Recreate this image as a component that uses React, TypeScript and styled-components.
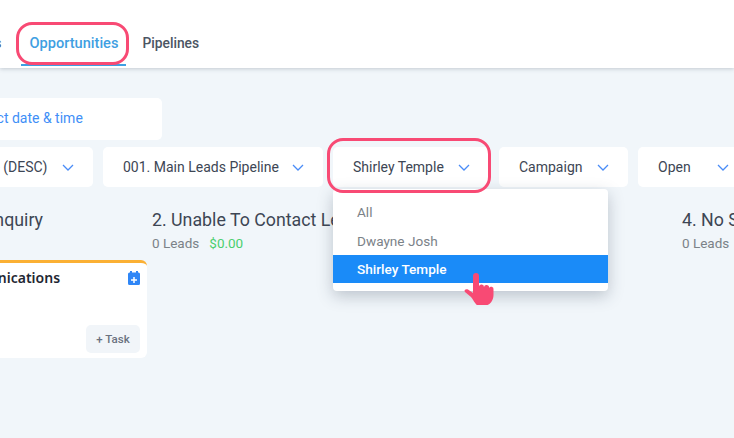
import styled, { createGlobalStyle } from 'styled-components'

const GlobalStyle = createGlobalStyle`
  html, body {
    margin: 0;
    padding: 0;
    background: #f1f6fa;
    font-family: Roboto, "Liberation Sans", sans-serif;
  }
`

const Page = styled.div`
  width: 734px;
  height: 438px;
  overflow: hidden;
  background: #f1f6fa;
`

const Header = styled.header`
  height: 68px;
  background: #fff;
  box-shadow: 0 1px 4px rgba(60, 70, 90, 0.25);
  display: flex;
  align-items: stretch;
  justify-content: flex-start;
`

const Tabs = styled.nav`
  display: flex;
  align-items: stretch;
  gap: 8px;
  margin-left: -62px;
`

const Tab = styled.a<{ $active?: boolean }>`
  position: relative;
  display: flex;
  align-items: center;
  height: 66px;
  padding: 22px 8px 0;
  box-sizing: border-box;
  font-size: ${props => (props.$active ? '14.6px' : '13.8px')};
  font-weight: 500;
  color: ${props => (props.$active ? '#3f9fe2' : '#4b5563')};
  border-bottom: 2px solid ${props => (props.$active ? '#3f9fe2' : 'transparent')};
  white-space: nowrap;

  &:first-child {
    padding-right: 12px;
  }
`

const Highlight = styled.span<{ $inset: string }>`
  position: absolute;
  inset: ${props => props.$inset};
  border: 3px solid #f84a74;
  border-radius: 16px;
  pointer-events: none;
  z-index: 3;
`

const Content = styled.main`
  padding-top: 30px;
`

const DateBox = styled.div`
  width: 209px;
  height: 42px;
  margin-left: -47px;
  padding: 0 0 2px 17px;
  box-sizing: border-box;
  display: flex;
  align-items: center;
  background: #fff;
  border-radius: 5px;
  font-size: 14px;
  color: #3f8ff7;
`

const Filters = styled.div`
  display: flex;
  gap: 10px;
  margin: 7px 0 0 -49px;
`

const Select = styled.div<{ $width: number }>`
  position: relative;
  flex: 0 0 ${props => props.$width}px;
  height: 40px;
  padding: 0 19px 0 20px;
  box-sizing: border-box;
  display: flex;
  align-items: center;
  justify-content: space-between;
  background: #fff;
  border-radius: 5px;
  font-size: 14px;
  color: #3d4654;
  white-space: nowrap;
`

const Chevron = styled.svg`
  flex: none;
  width: 12px;
  height: 7px;
  fill: none;
  stroke: #4a8cf7;
  stroke-width: 1.3;
`

const Menu = styled.ul`
  position: absolute;
  top: 42px;
  left: 0;
  width: 275px;
  height: 102px;
  margin: 0;
  padding: 8px 0 0;
  box-sizing: border-box;
  list-style: none;
  background: #fff;
  border-radius: 4px;
  box-shadow: 0 5px 16px rgba(50, 65, 85, 0.28);
  z-index: 2;
`

const MenuItem = styled.li<{ $selected?: boolean }>`
  height: 28px;
  margin-bottom: 1px;
  padding: ${props => (props.$selected ? '0' : '2px 0 0')};
  padding-left: 24px;
  box-sizing: border-box;
  display: flex;
  align-items: center;
  font-size: 13.6px;
  font-weight: ${props => (props.$selected ? 500 : 400)};
  color: ${props => (props.$selected ? '#fff' : '#7b8288')};
  background: ${props => (props.$selected ? '#1a8bf8' : 'transparent')};
`

const Hand = styled.svg`
  position: absolute;
  left: 129px;
  top: 82px;
  width: 34px;
  height: 36px;
  fill: #f84a74;
  z-index: 4;
`

const Board = styled.section`
  display: flex;
  gap: 5px;
  margin: 21px 0 0 -113px;
`

const Column = styled.div`
  flex: 0 0 260px;
`

const ColumnTitle = styled.h2`
  margin: 0;
  font-size: 17.8px;
  line-height: 24px;
  font-weight: 400;
  color: #3d4654;
  white-space: nowrap;
`

const ColumnMeta = styled.div`
  display: flex;
  gap: 10px;
  margin-top: 1px;
  font-size: 13.5px;
  line-height: 20px;
  color: #7b8288;
`

const Amount = styled.span`
  color: #4bcf6f;
`

const Card = styled.article`
  height: 98px;
  margin-top: 7px;
  padding: 6px 7px 5px 21px;
  box-sizing: border-box;
  display: flex;
  flex-direction: column;
  background: #fff;
  border-top: 3px solid #fbb034;
  border-radius: 6px;
`

const CardHead = styled.div`
  display: flex;
  align-items: center;
  justify-content: space-between;
`

const CardTitle = styled.h3`
  margin: 0;
  font-family: "Noto Sans", sans-serif;
  font-size: 14px;
  line-height: 18px;
  font-weight: 600;
  color: #1f2733;
  white-space: nowrap;
`

const CalendarIcon = styled.svg`
  width: 12px;
  height: 14px;
`

const TaskButton = styled.button`
  align-self: flex-end;
  margin-top: auto;
  width: 54px;
  height: 28px;
  padding: 0;
  border: 0;
  border-radius: 5px;
  background: #f1f5f9;
  font-family: Roboto, sans-serif;
  font-size: 11.5px;
  font-weight: 500;
  color: #6b7280;
`

function ChevronDown() {
  return (
    <Chevron viewBox="0 0 12 7">
      <path d="M1 1l5 5 5-5" />
    </Chevron>
  )
}

export default function App() {
  return (
    <Page>
      <GlobalStyle />
      <Header>
        <Tabs>
          <Tab>Contacts</Tab>
          <Tab $active>
            Opportunities
            <Highlight $inset="22px -3px -1px -5px" />
          </Tab>
          <Tab>Pipelines</Tab>
        </Tabs>
      </Header>
      <Content>
        <DateBox>Select date &amp; time</DateBox>
        <Filters>
          <Select $width={142}>
            <span>Date (DESC)</span>
            <ChevronDown />
          </Select>
          <Select $width={220}>
            <span>001. Main Leads Pipeline</span>
            <ChevronDown />
          </Select>
          <Select $width={156}>
            <span>Shirley Temple</span>
            <ChevronDown />
            <Highlight $inset="-9px -2px -6px -6px" />
            <Menu>
              <MenuItem>All</MenuItem>
              <MenuItem>Dwayne Josh</MenuItem>
              <MenuItem $selected>Shirley Temple</MenuItem>
              <Hand viewBox="0 0 34 36">
                <path d="M11 5a3 3 0 0 1 6 0V15a2.6 2.6 0 0 1 5 1a2.5 2.5 0 0 1 5 1a2.4 2.4 0 0 1 4.5 1.5V24c0 5-3 9-6 10H15c-2-1-4-6-6-8L3 21c-1.5-2 1-3.5 3-2.5L11 22Z" />
              </Hand>
            </Menu>
          </Select>
          <Select $width={129}>
            <span>Campaign</span>
            <ChevronDown />
          </Select>
          <Select $width={110}>
            <span>Open</span>
            <ChevronDown />
          </Select>
        </Filters>
        <Board>
          <Column>
            <ColumnTitle>1. New Mail Enquiry</ColumnTitle>
            <ColumnMeta>
              <span>1 Leads</span>
              <Amount>$0.00</Amount>
            </ColumnMeta>
            <Card>
              <CardHead>
                <CardTitle>Lead Communications</CardTitle>
                <CalendarIcon viewBox="0 0 12 14">
                  <path fill="#2f86f6" d="M2 0h2v1.500h4V0h2v1.500h.5A1.500 1.500 0 0 1 12 3v9.500a1.500 1.500 0 0 1-1.500 1.500h-9A1.500 1.500 0 0 1 0 12.500V3a1.500 1.500 0 0 1 1.500-1.500H2z" />
                  <path stroke="#fff" strokeWidth="1.5" d="M3 9h6M6 6v6" />
                </CalendarIcon>
              </CardHead>
              <TaskButton>+ Task</TaskButton>
            </Card>
          </Column>
          <Column>
            <ColumnTitle>2. Unable To Contact Leads</ColumnTitle>
            <ColumnMeta>
              <span>0 Leads</span>
              <Amount>$0.00</Amount>
            </ColumnMeta>
          </Column>
          <Column>
            <ColumnTitle>3. Contact Made</ColumnTitle>
            <ColumnMeta>
              <span>0 Leads</span>
              <Amount>$0.00</Amount>
            </ColumnMeta>
          </Column>
          <Column>
            <ColumnTitle>4. No Show</ColumnTitle>
            <ColumnMeta>
              <span>0 Leads</span>
              <Amount>$0.00</Amount>
            </ColumnMeta>
          </Column>
        </Board>
      </Content>
    </Page>
  )
}
